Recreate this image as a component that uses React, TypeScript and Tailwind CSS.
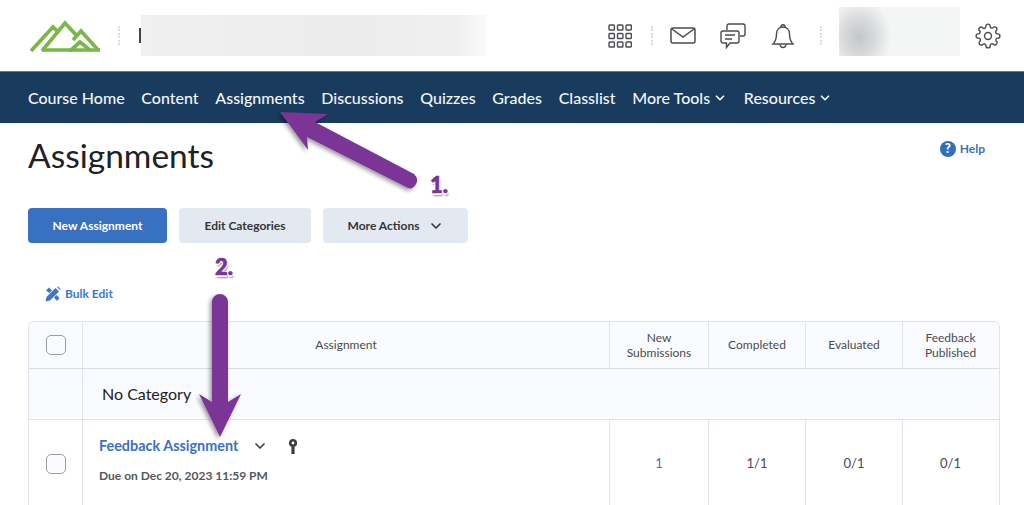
import { ChevronDown } from 'lucide-react'

const navItems = ['Course Home', 'Content', 'Assignments', 'Discussions', 'Quizzes', 'Grades', 'Classlist']

function DotDivider() {
  return (
    <div className="flex h-[20px] w-[3px] flex-col justify-between">
      {[0, 1, 2, 3, 4, 5].map((i) => (
        <span key={i} className="h-[2px] w-[2px] rounded-full bg-[#c5cfdc]" />
      ))}
    </div>
  )
}

function Logo() {
  return (
    <svg width="72" height="32" viewBox="0 0 72 32" fill="none" stroke="#7ab648" strokeWidth="3.7">
      <path d="M2 31 L24 7 L30 13" />
      <path d="M13 31 L36 3 L48 16" />
      <path d="M44 20 L52 11 L70 31" />
      <path d="M13 30 H71" />
      <path d="M41 31 L51 22 L62 31" />
    </svg>
  )
}

function TopIcons() {
  return (
    <div className="flex items-center">
      <svg width="24" height="24" viewBox="0 0 24 24" fill="none" stroke="#4a4c50" strokeWidth="1.4" className="mr-[19px]">
        {[1, 9.5, 18].map((y) =>
          [1, 9.5, 18].map((x) => <rect key={`${x}-${y}`} x={x} y={y} width="5.4" height="5" rx="0.8" />),
        )}
      </svg>
      <DotDivider />
      <svg width="26" height="17" viewBox="0 0 26 17" fill="none" stroke="#4a4c50" strokeWidth="1.5" className="ml-[16px] mr-[24px]">
        <rect x="1" y="1" width="24" height="15" rx="2" />
        <path d="M2 2 L13 10 L24 2" />
      </svg>
      <svg width="26" height="26" viewBox="0 0 26 26" fill="none" stroke="#4a4c50" strokeWidth="1.4" className="mr-[25px]">
        <path d="M7 7 V3 a2 2 0 0 1 2 -2 H23 a2 2 0 0 1 2 2 V11 a2 2 0 0 1 -2 2 H20" />
        <path d="M3 8 H17 a2 2 0 0 1 2 2 V18 a2 2 0 0 1 -2 2 H10 L6.5 24.5 V20 H3 a2 2 0 0 1 -2 -2 V10 a2 2 0 0 1 2 -2 Z" />
        <path d="M5 12 H15 M5 16 H12" />
      </svg>
      <svg width="24" height="26" viewBox="0 0 24 26" fill="none" stroke="#4a4c50" strokeWidth="1.4" className="mr-[25px]">
        <path d="M2 21 C5 18 5.5 15 5.5 11 C5.5 7 8 4 12 4 C16 4 18.5 7 18.5 11 C18.5 15 19 18 22 21 Z" />
        <path d="M10 4 C10 1 14 1 14 4 M9 21.5 C9.5 25.5 14.5 25.5 15 21.5" />
      </svg>
      <DotDivider />
      <div className="mb-[8px] ml-[16px] mr-[15px] h-[49px] w-[121px] bg-[radial-gradient(ellipse_32px_38px_at_20px_30px,#c4c7ca_0%,#d8dadc_50%,#f4f5f5_100%),linear-gradient(90deg,#f1f2f2,#fafafa)]" />
      <svg width="26" height="26" viewBox="0 0 24 24" fill="none" stroke="#4a4c50" strokeWidth="1.3" className="mr-[23px]">
        <circle cx="12" cy="12" r="3.2" />
        <path d="M19.4 15a1.65 1.65 0 0 0 .33 1.82l.06.06a2 2 0 1 1-2.83 2.83l-.06-.06a1.65 1.65 0 0 0-2.8 1.17V21a2 2 0 1 1-4 0v-.09a1.65 1.65 0 0 0-2.82-1.16l-.06.06a2 2 0 1 1-2.83-2.83l.06-.06A1.65 1.65 0 0 0 3.09 14H3a2 2 0 1 1 0-4h.09a1.65 1.65 0 0 0 1.16-2.82l-.06-.06a2 2 0 1 1 2.83-2.83l.06.06A1.65 1.65 0 0 0 10 3.09V3a2 2 0 1 1 4 0v.09a1.65 1.65 0 0 0 2.82 1.16l.06-.06a2 2 0 1 1 2.83 2.83l-.06.06A1.65 1.65 0 0 0 20.91 10H21a2 2 0 1 1 0 4h-.09a1.65 1.65 0 0 0-1.51 1z" />
      </svg>
    </div>
  )
}

function Arrows() {
  return (
    <svg width="1024" height="505" viewBox="0 0 1024 505" className="pointer-events-none absolute left-0 top-0">
      <defs>
        <filter id="arrowShadow" x="-20%" y="-20%" width="140%" height="140%">
          <feDropShadow dx="-2" dy="2" stdDeviation="2" floodColor="#000" floodOpacity="0.4" />
        </filter>
      </defs>
      <g filter="url(#arrowShadow)" fill="#7a3596">
        <path d="M280 112 L328 114 L315 122 L414 174 Q419 179 416 184 Q412 191 406 187 L307 137 L308 150 Z" />
        <path d="M212 302 a8 8 0 0 1 16 0 V402 L241 394 L220 437 L199 394 L212 402 Z" />
      </g>
    </svg>
  )
}

function StepLabel({ children, className }: { children: string; className: string }) {
  return (
    <span className={`absolute text-[22px] font-black leading-none text-[#7a3596] [-webkit-text-stroke:0.7px_#7a3596] [text-shadow:-1px_0_0_#fff,1px_0_0_#fff,0_-1px_0_#fff,-1px_-1px_0_#fff,1px_-1px_0_#fff,0_1px_0_#fff,1px_1px_0_#fff,-1px_1px_0_#fff,0_2px_0_#fff,1px_3px_2px_#8c8c8c] ${className}`}>
      {children}
    </span>
  )
}

export default function App() {
  return (
    <div className="relative h-[505px] w-[1024px] overflow-hidden bg-white font-['Lato',sans-serif] text-[#202122]">
      {/* top bar */}
      <header className="flex h-[71px] items-center justify-between pl-[29px]">
        <div className="flex items-center">
          <Logo />
          <div className="ml-[17px]"><DotDivider /></div>
          <div className="ml-[18px] h-[15px] w-[1.5px] bg-[#444]" />
          <div className="h-[41px] w-[346px] bg-[linear-gradient(90deg,#f0f0f0_0%,#ececed_60%,#f0f0f0_92%,#fbfbfb_100%)]" />
        </div>
        <TopIcons />
      </header>

      {/* nav */}
      <nav className="flex h-[52px] items-center gap-[16.7px] border-t border-[#5d7a99] bg-[#193b5e] pl-[28px] text-[16px] font-medium text-[#f2f5f8]">
        {navItems.map((item) => (
          <span key={item}>{item}</span>
        ))}
        <span className="flex items-center gap-[3px]">More Tools <ChevronDown size={14} strokeWidth={3} /></span>
        <span className="flex items-center gap-[3px]">Resources <ChevronDown size={14} strokeWidth={3} /></span>
      </nav>

      <main className="pl-[28px] pr-[24px]">
        <div className="flex items-start justify-between pt-[11px]">
          <h1 className="text-[33.5px] leading-[43px]">Assignments</h1>
          <div className="mr-[15px] mt-[6px] flex items-center gap-[4px] text-[12px] font-bold text-[#3a72c0]">
            <span className="flex h-[16px] w-[16px] items-center justify-center rounded-full bg-[#2f6fc0] text-[13px] font-black text-white">?</span>
            Help
          </div>
        </div>

        <div className="mt-[31px] flex gap-[12px] text-[12px] font-bold">
          <button className="h-[35px] w-[139px] rounded-[4px] bg-[#3870c2] text-white">New Assignment</button>
          <button className="h-[35px] w-[132px] rounded-[4px] bg-[#e3e9f1] text-[#33353a]">Edit Categories</button>
          <button className="flex h-[35px] w-[145px] items-center justify-center gap-[9px] rounded-[4px] bg-[#e3e9f1] pl-[1px] text-[#33353a]">
            More Actions <ChevronDown size={16} strokeWidth={2.5} />
          </button>
        </div>

        <div className="ml-[17px] mt-[42px] flex h-[18px] items-center gap-[4px] text-[12px] font-bold text-[#3a78c9]">
          <svg width="16" height="16" viewBox="0 0 16 16" fill="#3a78c9">
            <path d="M0.5 15.5 L1.5 11 L10.5 2 L14 5.5 L5 14.5 Z" />
            <path d="M11.8 0.8 L13 0.5 L15.5 3 L15.2 4.2 Z" />
            <path d="M1 4.5 L4 1.5 L7 4.5 L4.5 7 Z" />
            <path d="M9 11.5 L11.5 9 L14.5 12 L12 15 Z" />
          </svg>
          Bulk Edit
        </div>

        {/* table */}
        <div className="mt-[18px] h-[200px] overflow-hidden rounded-t-[6px] border border-b-0 border-[#dfe3ea] text-[12px] text-[#494c50]">
          <div className="grid h-[47px] grid-cols-[53px_527px_99px_97px_97px_1fr] border-b border-[#d8dee7] bg-[#f9fbff] text-center leading-[15px]">
            <div className="flex items-center justify-center">
              <span className="h-[20px] w-[20px] rounded-[5px] border border-[#9a9da1] bg-[#f9fbff]" />
            </div>
            <div className="flex items-center justify-center border-l border-[#dfe3ea] pb-[1px]">Assignment</div>
            <div className="flex items-center justify-center border-l border-[#dfe3ea] pb-[1px]">New<br />Submissions</div>
            <div className="flex items-center justify-center border-l border-[#dfe3ea] pb-[1px]">Completed</div>
            <div className="flex items-center justify-center border-l border-[#dfe3ea] pb-[1px]">Evaluated</div>
            <div className="flex items-center justify-center border-l border-[#dfe3ea] pb-[1px] pr-[1px]">Feedback<br />Published</div>
          </div>
          <div className="grid h-[51px] grid-cols-[53px_1fr] border-b border-[#dfe3ea] bg-[#f9fbff]">
            <div />
            <div className="flex items-center border-l border-[#dfe3ea] pl-[19px] text-[16px] text-[#202122]">No Category</div>
          </div>
          <div className="grid h-[100px] grid-cols-[53px_527px_99px_97px_97px_1fr] text-center text-[13px]">
            <div className="flex justify-center pt-[34px]">
              <span className="h-[20px] w-[20px] rounded-[5px] border border-[#9a9da1] bg-[#f9fbff]" />
            </div>
            <div className="border-l border-[#dfe3ea] pl-[16px] pt-[17px] text-left">
              <div className="flex h-[18px] items-center text-[14.4px] font-bold text-[#3a72c0]">
                Feedback Assignment
                <ChevronDown size={16} strokeWidth={2.5} className="ml-[14px] text-[#3c3f44]" />
                <svg width="10" height="18" viewBox="0 0 10 18" fill="#3c3f44" className="ml-[20px] mt-[2px]">
                  <path fillRule="evenodd" d="M5 1a4 4 0 0 1 1.6 7.7V16H3.4V8.7A4 4 0 0 1 5 1Zm0 2.6a1.4 1.4 0 1 0 0 2.8 1.4 1.4 0 0 0 0-2.8Z" />
                </svg>
              </div>
              <div className="mt-[12px] text-[12px] font-bold text-[#55585c]">Due on Dec 20, 2023 11:59 PM</div>
            </div>
            <div className="border-l border-[#dfe3ea] pt-[34px] text-[#3a72c0]">1</div>
            <div className="border-l border-[#dfe3ea] pt-[34px]">1/1</div>
            <div className="border-l border-[#dfe3ea] pt-[34px]">0/1</div>
            <div className="border-l border-[#dfe3ea] pr-[1px] pt-[34px]">0/1</div>
          </div>
        </div>
      </main>

      <Arrows />
      <StepLabel className="left-[430px] top-[174px]">1.</StepLabel>
      <StepLabel className="left-[215px] top-[256px]">2.</StepLabel>
    </div>
  )
}
